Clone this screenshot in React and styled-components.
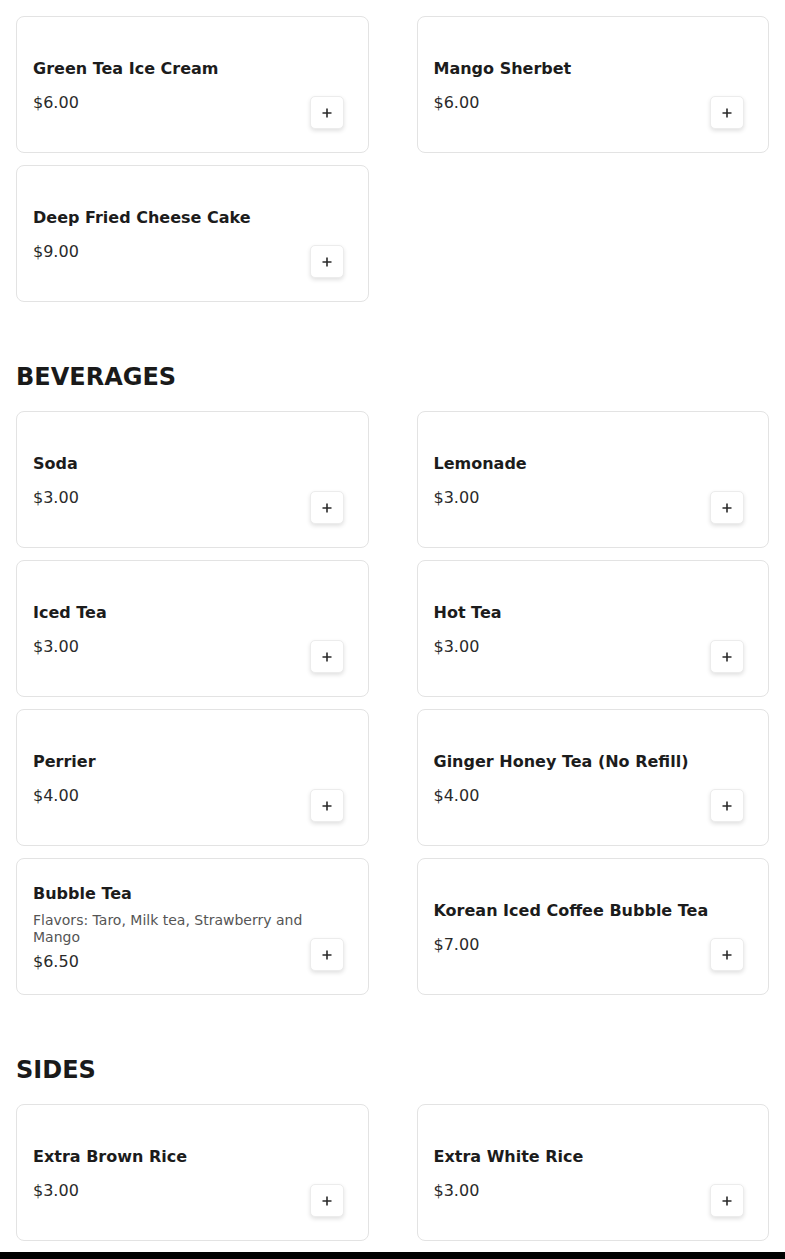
import React from 'react';
import styled, { createGlobalStyle } from 'styled-components';

const GlobalStyle = createGlobalStyle`
  body {
    margin: 0;
    background: #ffffff;
    font-family: "DejaVu Sans", "Liberation Sans", sans-serif;
    color: #1a1a1a;
  }
`;

const Page = styled.main`
  padding: 16px 16px 11px;
`;

const Section = styled.section`
  & + & {
    margin-top: 58px;
  }
`;

const SectionTitle = styled.h2`
  margin: 0 0 17px;
  font-size: 24px;
  line-height: 34px;
  font-weight: 700;
  color: #1a1a1a;
`;

const Grid = styled.div`
  display: grid;
  grid-template-columns: 1fr 1fr;
  column-gap: 48px;
  row-gap: 12px;
`;

const Card = styled.div`
  display: flex;
  justify-content: space-between;
  align-items: center;
  min-height: 137px;
  box-sizing: border-box;
  padding: 16px;
  border: 1px solid #e3e3e3;
  border-radius: 8px;
  background: #fff;
`;

const Info = styled.div`
  flex: 1;
  min-width: 0;
  display: flex;
  flex-direction: column;
  padding-top: 2px;
`;

const Name = styled.div`
  font-size: 16px;
  line-height: 24px;
  font-weight: 700;
  color: #1c1c1c;
  margin-bottom: 6px;
  white-space: nowrap;
`;

const Description = styled.div`
  font-size: 14px;
  line-height: 17px;
  color: #555;
`;

const Price = styled.div`
  font-size: 16px;
  line-height: 24px;
  color: #2a2a2a;
  margin-top: 4px;
`;

const AddButton = styled.button`
  flex: none;
  align-self: flex-end;
  display: flex;
  align-items: center;
  justify-content: center;
  width: 34px;
  height: 33px;
  margin: 0 8px 7px 0;
  padding: 0;
  border: 1px solid #ececec;
  border-radius: 5px;
  background: #fff;
  box-shadow: 0 2px 4px rgba(0, 0, 0, 0.12);
  cursor: pointer;
`;

const Footer = styled.footer`
  height: 60px;
  background: #000;
`;

const PlusIcon = () => (
  <svg width="10" height="10" viewBox="0 0 10 10" aria-hidden="true">
    <path d="M5 0.5v9M0.5 5h9" stroke="#2a2a2a" strokeWidth="1.6" fill="none" />
  </svg>
);

const sections = [
  {
    title: null,
    items: [
      { name: 'Green Tea Ice Cream', price: '$6.00' },
      { name: 'Mango Sherbet', price: '$6.00' },
      { name: 'Deep Fried Cheese Cake', price: '$9.00' },
    ],
  },
  {
    title: 'BEVERAGES',
    items: [
      { name: 'Soda', price: '$3.00' },
      { name: 'Lemonade', price: '$3.00' },
      { name: 'Iced Tea', price: '$3.00' },
      { name: 'Hot Tea', price: '$3.00' },
      { name: 'Perrier', price: '$4.00' },
      { name: 'Ginger Honey Tea (No Refill)', price: '$4.00' },
      {
        name: 'Bubble Tea',
        description: 'Flavors: Taro, Milk tea, Strawberry and Mango',
        price: '$6.50',
      },
      { name: 'Korean Iced Coffee Bubble Tea', price: '$7.00' },
    ],
  },
  {
    title: 'SIDES',
    items: [
      { name: 'Extra Brown Rice', price: '$3.00' },
      { name: 'Extra White Rice', price: '$3.00' },
    ],
  },
];

const MenuItem = ({ item }) => (
  <Card>
    <Info>
      <Name>{item.name}</Name>
      {item.description && <Description>{item.description}</Description>}
      <Price>{item.price}</Price>
    </Info>
    <AddButton aria-label={`Add ${item.name}`}>
      <PlusIcon />
    </AddButton>
  </Card>
);

export default function App() {
  return (
    <>
      <GlobalStyle />
      <Page>
        {sections.map((section, i) => (
          <Section key={i}>
            {section.title && <SectionTitle>{section.title}</SectionTitle>}
            <Grid>
              {section.items.map((item) => (
                <MenuItem key={item.name} item={item} />
              ))}
            </Grid>
          </Section>
        ))}
      </Page>
      <Footer />
    </>
  );
}
